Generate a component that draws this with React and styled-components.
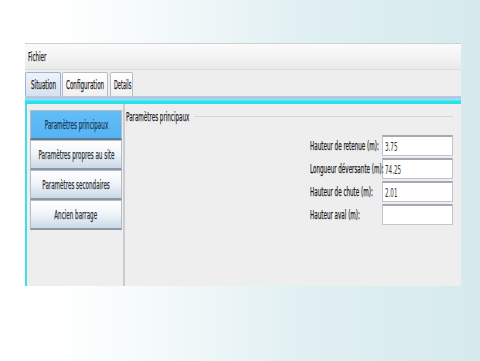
import React from "react";
import styled, { createGlobalStyle } from "styled-components";

const Global = createGlobalStyle`
  html, body { margin: 0; padding: 0; }
  body {
    width: 480px;
    height: 361px;
    overflow: hidden;
    background: linear-gradient(90deg, #ffffff 0%, #ffffff 12%, #f1f8f9 38%, #e0eff2 65%, #d6eaee 100%);
    font-family: "DejaVu Sans", "Liberation Sans", sans-serif;
  }
`;

const Page = styled.div`
  padding: 43px 0 0 25px;
`;

const Window = styled.div`
  width: 436px;
  background: #eeeeee;
  display: flex;
  flex-direction: column;
`;

const Squeeze = styled.span`
  display: inline-block;
  white-space: nowrap;
  font-family: "DejaVu Sans", "Liberation Sans", sans-serif;
  font-size: 12.5px;
  line-height: 15px;
  color: ${(p) => p.$color || "#111"};
  transform: scaleX(${(p) => p.$sx || 0.45});
  transform-origin: ${(p) => p.$origin || "left"} center;
  -webkit-text-stroke: 0.25px ${(p) => p.$color || "#111"};
`;

const MenuBar = styled.div`
  height: 27px;
  border-top: 1px solid #cfd2d4;
  border-bottom: 1px solid #dcdcdc;
  background: linear-gradient(180deg, #fbfbfb 0%, #f3f3f3 55%, #e9e9e9 100%);
  display: flex;
  align-items: center;
  padding-left: 3px;
  box-sizing: border-box;
`;

const TabRow = styled.div`
  height: 26px;
  display: flex;
  align-items: flex-end;
  gap: 1px;
  background: #eeeeee;
  padding-top: 2px;
  box-sizing: border-box;
`;

const Tab = styled.div`
  width: ${(p) => p.$w}px;
  height: 24px;
  box-sizing: border-box;
  padding-left: ${(p) => p.$pl || 5}px;
  display: flex;
  align-items: center;
  overflow: visible;
  border: 1px solid ${(p) => (p.$active ? "#9fb2d6" : "#b8bcc4")};
  border-bottom: none;
  border-radius: 2px 2px 0 0;
  background: ${(p) =>
    p.$active
      ? "linear-gradient(180deg, #eef3fa 0%, #d7e1ef 100%)"
      : "linear-gradient(180deg, #ffffff 0%, #f0f0f0 100%)"};
  margin-right: ${(p) => p.$mr || 0}px;
`;

const TabLine = styled.div`
  height: 3px;
  background: #b9c5e4;
`;

const Accent = styled.div`
  height: 5px;
  background: linear-gradient(180deg, #9ef2f6 0%, #2fe4ee 40%, #2adfea 100%);
`;

const Content = styled.div`
  height: 182px;
  display: flex;
`;

const Sidebar = styled.div`
  width: 100px;
  box-sizing: border-box;
  border-left: 2px solid #3fdfea;
  border-right: 2px solid #c9cdd2;
  padding: 6px 0 0 3px;
  display: flex;
  flex-direction: column;
`;

const NavButton = styled.div`
  width: 92px;
  height: 30px;
  box-sizing: border-box;
  display: flex;
  align-items: center;
  justify-content: center;
  overflow: visible;
  border: 1px solid #b4bcc6;
  border-bottom: 2px solid ${(p) => (p.$active ? "#5f7a94" : "#8c98a6")};
  background: ${(p) =>
    p.$active
      ? "linear-gradient(180deg, #62bdf7 0%, #55b4f3 100%)"
      : "linear-gradient(180deg, #ffffff 0%, #f1f5f9 45%, #cbd9e6 100%)"};
`;

const Main = styled.div`
  flex: 1;
  padding: 4px 8px 0 1px;
  display: flex;
  flex-direction: column;
`;

const GroupHead = styled.div`
  display: flex;
  align-items: center;
  height: 15px;
`;

const GroupTitle = styled.div`
  width: 68px;
  overflow: visible;
`;

const GroupLine = styled.div`
  flex: 1;
  height: 1px;
  background: #d3d6d9;
  margin-top: 2px;
`;

const Form = styled.div`
  margin-top: 12px;
  display: grid;
  grid-template-columns: 72px 71px;
  grid-auto-rows: 21px;
  row-gap: 2px;
  justify-content: end;
`;

const Label = styled.div`
  display: flex;
  align-items: center;
  overflow: visible;
`;

const Field = styled.div`
  box-sizing: border-box;
  background: #ffffff;
  border: 1px solid #c2c6cb;
  border-top: 2px solid #a3aab2;
  display: flex;
  align-items: center;
  padding-left: 2px;
  overflow: hidden;
`;

const Value = styled(Squeeze)`
  -webkit-text-stroke: 0;
`;

const fields = [
  ["Hauteur de retenue (m):", "3.75"],
  ["Longueur déversante (m):", "74.25"],
  ["Hauteur de chute (m):", "2.01"],
  ["Hauteur aval (m):", ""],
];

const nav = [
  "Paramètres principaux",
  "Paramètres propres au site",
  "Paramètres secondaires",
  "Ancien barrage",
];

export default function App() {
  return (
    <>
      <Global />
      <Page>
        <Window>
          <MenuBar>
            <Squeeze $color="#1e1e1e">Fichier</Squeeze>
          </MenuBar>
          <TabRow>
            <Tab $w={36} $active>
              <Squeeze $color="#1a1a1a">Situation</Squeeze>
            </Tab>
            <Tab $w={46} $mr={1} $pl={3}>
              <Squeeze $color="#1a1a1a">Configuration</Squeeze>
            </Tab>
            <Tab $w={23} $pl={3}>
              <Squeeze $color="#1a1a1a" $sx={0.4}>Details</Squeeze>
            </Tab>
          </TabRow>
          <TabLine />
          <Accent />
          <Content>
            <Sidebar>
              {nav.map((n, i) => (
                <NavButton key={n} $active={i === 0}>
                  <Squeeze $origin="center" $color={i === 0 ? "#1b3550" : "#2a2f36"}>
                    {n}
                  </Squeeze>
                </NavButton>
              ))}
            </Sidebar>
            <Main>
              <GroupHead>
                <GroupTitle>
                  <Squeeze $color="#1e1e1e">Paramètres principaux</Squeeze>
                </GroupTitle>
                <GroupLine />
              </GroupHead>
              <Form>
                {fields.map(([l, v]) => (
                  <React.Fragment key={l}>
                    <Label>
                      <Squeeze $color="#151515">{l}</Squeeze>
                    </Label>
                    <Field>
                      <Value $color="#333">{v}</Value>
                    </Field>
                  </React.Fragment>
                ))}
              </Form>
            </Main>
          </Content>
        </Window>
      </Page>
    </>
  );
}
